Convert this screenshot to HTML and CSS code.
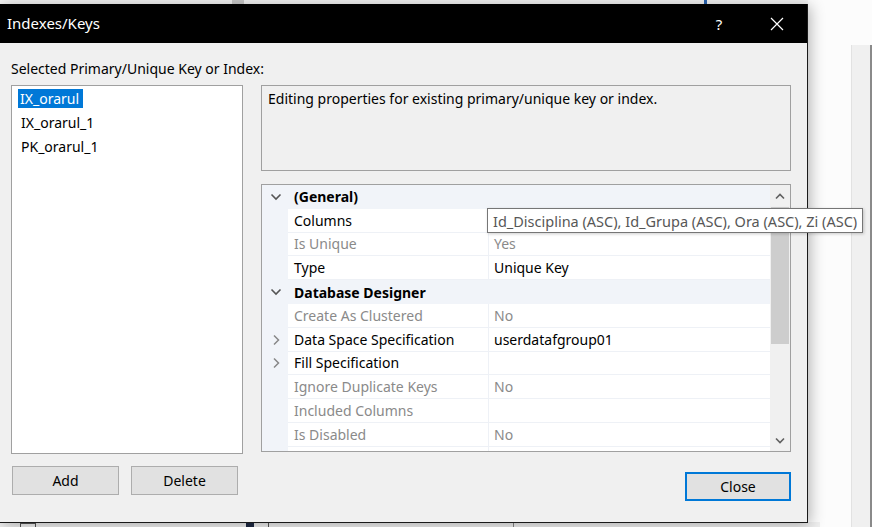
FILE: index.html
```html
<!DOCTYPE html>
<html>
<head>
<meta charset="utf-8">
<link rel="stylesheet" href="styles.css">
</head>
<body>
<div class="screen">
  <div class="bg-top"><span class="bg-top-block b1"></span><span class="bg-top-block b2"></span></div>
  <div class="bg-right"><div class="bg-panel"></div></div>
  <div class="bg-bottom"><span class="bb-icon"></span><span class="bb-dark"></span><span class="bb-line"></span><span class="bb-line2"></span></div>

  <div class="dialog">
    <div class="titlebar">
      <span class="title">Indexes/Keys</span>
      <span class="help">?</span>
      <svg class="close-x" width="14" height="14" viewBox="0 0 14 14"><path d="M1 1 L13 13 M13 1 L1 13" stroke="#fff" stroke-width="1.2" fill="none"/></svg>
    </div>
    <div class="body">
      <div class="label">Selected Primary/Unique Key or Index:</div>
      <div class="main">
        <div class="leftcol">
          <div class="list">
            <div class="item"><span class="sel">IX_orarul</span></div>
            <div class="item"><span>IX_orarul_1</span></div>
            <div class="item"><span>PK_orarul_1</span></div>
          </div>
          <div class="btnrow">
            <div class="btn">Add</div>
            <div class="btn">Delete</div>
          </div>
        </div>
        <div class="rightcol">
          <div class="desc">Editing properties for existing primary/unique key or index.</div>
          <div class="pgrid">
            <div class="rows">
              <div class="row cat"><span class="mg"><svg width="12" height="8" viewBox="0 0 12 8"><path d="M1.5 1.5 L6 6 L10.5 1.5" stroke="#555" stroke-width="1.6" fill="none"/></svg></span><span class="catname">(General)</span></div>
              <div class="row"><span class="mg"></span><span class="nm">Columns</span><span class="val"></span></div>
              <div class="row dis"><span class="mg"></span><span class="nm">Is Unique</span><span class="val">Yes</span></div>
              <div class="row"><span class="mg"></span><span class="nm">Type</span><span class="val">Unique Key</span></div>
              <div class="row cat"><span class="mg"><svg width="12" height="8" viewBox="0 0 12 8"><path d="M1.5 1.5 L6 6 L10.5 1.5" stroke="#555" stroke-width="1.6" fill="none"/></svg></span><span class="catname">Database Designer</span></div>
              <div class="row dis"><span class="mg"></span><span class="nm">Create As Clustered</span><span class="val">No</span></div>
              <div class="row"><span class="mg"><svg width="8" height="12" viewBox="0 0 8 12"><path d="M2 1.5 L6.5 6 L2 10.5" stroke="#888" stroke-width="1.5" fill="none"/></svg></span><span class="nm">Data Space Specification</span><span class="val">userdatafgroup01</span></div>
              <div class="row"><span class="mg"><svg width="8" height="12" viewBox="0 0 8 12"><path d="M2 1.5 L6.5 6 L2 10.5" stroke="#888" stroke-width="1.5" fill="none"/></svg></span><span class="nm">Fill Specification</span><span class="val"></span></div>
              <div class="row dis"><span class="mg"></span><span class="nm">Ignore Duplicate Keys</span><span class="val">No</span></div>
              <div class="row dis"><span class="mg"></span><span class="nm">Included Columns</span><span class="val"></span></div>
              <div class="row dis"><span class="mg"></span><span class="nm">Is Disabled</span><span class="val">No</span></div>
              <div class="row dis"><span class="mg"></span><span class="nm"></span><span class="val"></span></div>
            </div>
            <div class="vscroll">
              <div class="arrow"><svg width="10" height="7" viewBox="0 0 10 7"><path d="M1 5.5 L5 1.5 L9 5.5" stroke="#606060" stroke-width="1.6" fill="none"/></svg></div>
              <div class="track"><div class="thumb"></div></div>
              <div class="arrow"><svg width="10" height="7" viewBox="0 0 10 7"><path d="M1 1.5 L5 5.5 L9 1.5" stroke="#606060" stroke-width="1.6" fill="none"/></svg></div>
            </div>
          </div>
          <div class="closerow"><div class="btn primary">Close</div></div>
        </div>
      </div>
    </div>
    <div class="tooltip">Id_Disciplina (ASC), Id_Grupa (ASC), Ora (ASC), Zi (ASC)</div>
  </div>
</div>
</body>
</html>
```

FILE: styles.css
```css
* { box-sizing: border-box; }
html, body { margin: 0; padding: 0; }
body {
  width: 872px;
  height: 527px;
  overflow: hidden;
  font-family: "Noto Sans", "Open Sans", sans-serif;
  font-size: 14px;
  color: #000;
  background: #fbfbfb;
}
.screen {
  position: relative;
  width: 872px;
  height: 527px;
  overflow: hidden;
  background: #fbfbfb;
}

/* background application behind the dialog */
.bg-top {
  position: absolute;
  left: 0; top: 0;
  width: 820px; height: 6px;
  background: #f3f3f3;
  overflow: hidden;
}
.bg-top-block { position: absolute; top: 0; height: 6px; }
.bg-top-block.b1 { left: 232px; width: 12px; background: #c8c8c8; }
.bg-top-block.b2 { left: 704px; width: 3px; background: #2a64b0; }

.bg-right {
  position: absolute;
  left: 808px; top: 0;
  width: 64px; height: 527px;
  background: #fcfcfc;
}
.bg-panel {
  position: absolute;
  left: 43px; top: 45px;
  width: 21px; height: 482px;
  background: #f0f0f0;
  border-left: 1px solid #e2e2e2;
  border-right: 2px solid #8a8a8a;
}
.bg-bottom {
  position: absolute;
  left: 0; top: 522px;
  width: 820px; height: 5px;
  background: #f0f0f0;
  overflow: hidden;
}
.bb-icon { position: absolute; left: 20px; top: 1px; width: 16px; height: 6px; border: 1px solid #555; }
.bb-dark { position: absolute; left: 246px; top: 0; width: 8px; height: 5px; background: #1f2a44; }
.bb-line { position: absolute; left: 268px; top: 0; width: 1px; height: 5px; background: #555; }
.bb-line2 { position: absolute; left: 513px; top: 0; width: 1px; height: 5px; background: #888; }

/* dialog window */
.dialog {
  position: absolute;
  left: 0; top: 4px;
  width: 808px; height: 519px;
  background: #f0f0f0;
  border-right: 1px solid #1a1a1a;
  border-bottom: 1px solid #1a1a1a;
  box-shadow: 2px 2px 14px rgba(0,0,0,0.30);
  display: flex;
  flex-direction: column;
}
.titlebar {
  height: 39px;
  flex: none;
  background: #000;
  color: #fff;
  display: flex;
  align-items: center;
  padding-left: 7px;
}
.title { font-size: 15px; flex: 1; padding-bottom: 1px; }
.help { font-size: 15px; width: 20px; margin-right: 41px; text-align: center; }
.close-x { margin-right: 23px; }

.body {
  flex: 1;
  padding: 16px 0 0 11px;
}
.label { height: 26px; line-height: 20px; font-size: 14px; }
.main {
  display: grid;
  grid-template-columns: 232px 530px;
  column-gap: 18px;
}
.leftcol { display: flex; flex-direction: column; }
.list {
  height: 369px;
  background: #fff;
  border: 1px solid #a0a0a0;
  padding: 0 0 0 6px;
}
.item { height: 24px; display: flex; align-items: center; }
.item span { line-height: 19px; padding: 0 3px; }
.item .sel { background: #0078d7; color: #fff; padding: 0 4px 0 2px; }

.btnrow { display: flex; gap: 12px; margin-top: 12px; padding-left: 1px; }
.btn {
  width: 107px;
  height: 29px;
  background: #e1e1e1;
  border: 1px solid #adadad;
  display: flex;
  align-items: center;
  justify-content: center;
  font-size: 14px;
}

.rightcol { display: flex; flex-direction: column; }
.desc {
  height: 86px;
  border: 1px solid #a0a0a0;
  background: #f0f0f0;
  padding: 3px 6px;
  line-height: 20px;
}
.pgrid {
  margin-top: 13px;
  height: 268px;
  border: 1px solid #a0a0a0;
  background: #fff;
  display: flex;
  overflow: hidden;
}
.rows { width: 508px; flex: none; overflow: hidden; }
.row {
  height: 23.8px;
  display: flex;
  align-items: stretch;
}
.mg {
  width: 26px;
  flex: none;
  background: #f1f4f9;
  display: flex;
  align-items: center;
  justify-content: center;
  padding-left: 1px;
}
.nm {
  width: 201px;
  flex: none;
  border-right: 1px solid #eef1f6;
  border-bottom: 1px solid #eef1f6;
  padding-left: 6px;
  display: flex;
  align-items: center;
}
.val {
  flex: 1;
  border-bottom: 1px solid #eef1f6;
  padding-left: 5px;
  display: flex;
  align-items: center;
}
.row.dis .nm, .row.dis .val { color: #8a8a8a; }
.row.cat { background: #f1f4f9; }
.catname {
  font-weight: bold;
  padding-left: 6px;
  display: flex;
  align-items: center;
}

.vscroll {
  width: 20px;
  flex: none;
  background: #f0f0f0;
  display: flex;
  flex-direction: column;
}
.arrow {
  height: 22px;
  display: flex;
  align-items: center;
  justify-content: center;
}
.track { flex: 1; padding: 0 1px; }
.thumb { margin-top: 0; height: 137px; background: #cdcdcd; }

.closerow { display: flex; justify-content: flex-end; margin-top: 20px; }
.btn.primary { width: 106px; border: 2px solid #0078d7; }

.tooltip {
  position: absolute;
  left: 487px; top: 204px;
  height: 25px;
  padding: 0 5px;
  background: #fff;
  border: 1px solid #767676;
  color: #575757;
  font-size: 14.5px;
  display: flex;
  align-items: center;
  white-space: nowrap;
  box-shadow: 1px 1px 3px rgba(0,0,0,0.2);
}
```
